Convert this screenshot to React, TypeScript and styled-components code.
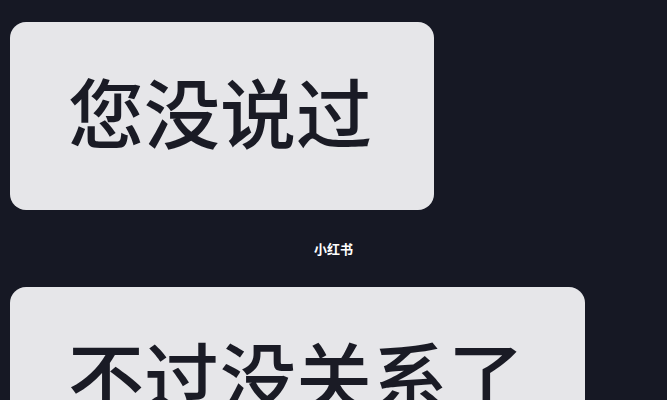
import styled, { createGlobalStyle } from 'styled-components';

const GlobalStyle = createGlobalStyle`
    html, body {
        margin: 0;
        padding: 0;
        background-color: #161824;
        overflow: hidden;
    }
`;

const Page = styled.div`
    width: 667px;
    height: 400px;
    background-color: #161824;
    padding: 22px 0 0 10px;
    box-sizing: border-box;
    display: flex;
    flex-direction: column;
    overflow: hidden;
    font-family: 'Noto Sans CJK SC', 'Noto Sans', sans-serif;
`;

const Bubble = styled.div<{ $width: number; $height: number; $padTop: number }>`
    width: ${(p) => p.$width}px;
    height: ${(p) => p.$height}px;
    flex-shrink: 0;
    box-sizing: border-box;
    padding: ${(p) => p.$padTop}px 0 0 58px;
    background-color: #e6e6e9;
    border-radius: 16px;
    color: #1a1b25;
    font-size: 76px;
    font-weight: 500;
    line-height: 1;
    white-space: nowrap;
`;

const Watermark = styled.div`
    height: 77px;
    flex-shrink: 0;
    margin-left: -10px;
    display: flex;
    align-items: center;
    justify-content: center;
    color: #ffffff;
    font-size: 13px;
    font-weight: 700;
`;

const App = () => {
    return (
        <>
            <GlobalStyle />
            <Page>
                <Bubble $width={424} $height={188} $padTop={50}>您没说过</Bubble>
                <Watermark>小红书</Watermark>
                <Bubble $width={575} $height={140} $padTop={49}>不过没关系了</Bubble>
            </Page>
        </>
    );
};

export default App;
